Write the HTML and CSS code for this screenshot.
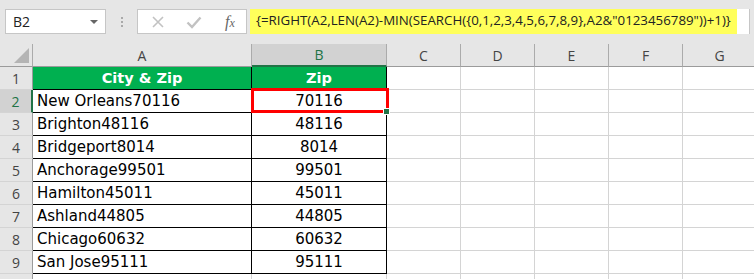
FILE: index.html
```html
<!DOCTYPE html>
<html lang="en">
<head>
    <meta charset="UTF-8">
    <title>Extract Zip</title>
    <link rel="stylesheet" href="styles.css">
</head>
<body>
    <div class="formula-bar">
        <div class="name-box">
            <span>B2</span>
            <span class="caret"></span>
        </div>
        <div class="grip"><i></i><i></i><i></i></div>
        <div class="fx-box">
            <svg class="ico" width="14" height="14" viewBox="0 0 14 14">
                <path d="M2 2 L12 12 M12 2 L2 12" stroke="#c2c2c2" stroke-width="1.6" fill="none"/>
            </svg>
            <svg class="ico" width="16" height="14" viewBox="0 0 16 14">
                <path d="M1.5 7.5 L6 12 L14.5 2.5" stroke="#c2c2c2" stroke-width="2.4" fill="none"/>
            </svg>
            <span class="fx">f<small>x</small></span>
        </div>
        <div class="formula">
            <span class="formula-text">{=RIGHT(A2,LEN(A2)-MIN(SEARCH({0,1,2,3,4,5,6,7,8,9},A2&amp;"0123456789"))+1)}</span>
        </div>
    </div>

    <div class="sheet">
        <!-- column headers -->
        <div class="ch corner"><span class="tri"></span></div>
        <div class="ch">A</div>
        <div class="ch sel">B</div>
        <div class="ch">C</div>
        <div class="ch">D</div>
        <div class="ch">E</div>
        <div class="ch">F</div>
        <div class="ch">G</div>

        <div class="rh">1</div>
        <div class="c t a head">City &amp; Zip</div>
        <div class="c t head">Zip</div>
        <div class="c"></div><div class="c"></div><div class="c"></div><div class="c"></div><div class="c"></div>

        <div class="rh sel">2</div>
        <div class="c t a">New Orleans70116</div>
        <div class="c t num active">70116<span class="handle"></span></div>
        <div class="c"></div><div class="c"></div><div class="c"></div><div class="c"></div><div class="c"></div>

        <div class="rh">3</div>
        <div class="c t a">Brighton48116</div>
        <div class="c t num">48116</div>
        <div class="c"></div><div class="c"></div><div class="c"></div><div class="c"></div><div class="c"></div>

        <div class="rh">4</div>
        <div class="c t a">Bridgeport8014</div>
        <div class="c t num">8014</div>
        <div class="c"></div><div class="c"></div><div class="c"></div><div class="c"></div><div class="c"></div>

        <div class="rh">5</div>
        <div class="c t a">Anchorage99501</div>
        <div class="c t num">99501</div>
        <div class="c"></div><div class="c"></div><div class="c"></div><div class="c"></div><div class="c"></div>

        <div class="rh">6</div>
        <div class="c t a">Hamilton45011</div>
        <div class="c t num">45011</div>
        <div class="c"></div><div class="c"></div><div class="c"></div><div class="c"></div><div class="c"></div>

        <div class="rh">7</div>
        <div class="c t a">Ashland44805</div>
        <div class="c t num">44805</div>
        <div class="c"></div><div class="c"></div><div class="c"></div><div class="c"></div><div class="c"></div>

        <div class="rh">8</div>
        <div class="c t a">Chicago60632</div>
        <div class="c t num">60632</div>
        <div class="c"></div><div class="c"></div><div class="c"></div><div class="c"></div><div class="c"></div>

        <div class="rh">9</div>
        <div class="c t a">San Jose95111</div>
        <div class="c t num">95111</div>
        <div class="c"></div><div class="c"></div><div class="c"></div><div class="c"></div><div class="c"></div>

        <!-- partly visible row 10 -->
        <div class="rh"></div>
        <div class="c"></div><div class="c"></div>
        <div class="c"></div><div class="c"></div><div class="c"></div><div class="c"></div><div class="c"></div>
    </div>
</body>
</html>
```

FILE: styles.css
```css
body {
	margin: 0;
	width: 754px;
	height: 279px;
	overflow: hidden;
	background-color: #fff;
	font-family: "Open Sans", "Noto Sans", sans-serif;
}

/* top strip: name box + formula */
.formula-bar {
	height: 44px;
	background-color: #e6e6e6;
	display: flex;
	align-items: flex-start;
	padding: 9px 4px 0 5px;
	box-sizing: border-box;
}

.name-box {
	width: 101px;
	height: 25px;
	box-sizing: border-box;
	background-color: #fff;
	border: 1px solid #c6c6c6;
	display: flex;
	align-items: center;
	justify-content: space-between;
	padding: 0 7px 0 7px;
	font-size: 14px;
	color: #222;
}

.caret {
	width: 0;
	height: 0;
	border-left: 4px solid transparent;
	border-right: 4px solid transparent;
	border-top: 4px solid #666;
}

.grip {
	width: 31px;
	height: 25px;
	display: flex;
	flex-direction: column;
	align-items: center;
	justify-content: center;
	gap: 2px;
}

.grip i {
	width: 2px;
	height: 2px;
	background-color: #a9a9a9;
}

.fx-box {
	width: 110px;
	height: 25px;
	box-sizing: border-box;
	background-color: #fff;
	border: 1px solid #c6c6c6;
	display: flex;
	align-items: center;
	padding: 0 0 0 13px;
	gap: 21px;
}

.fx {
	font-family: "Liberation Serif", serif;
	font-style: italic;
	font-size: 16px;
	color: #666;
	margin-left: 2px;
}

.fx small {
	font-size: 12px;
}

.formula {
	margin-left: 3px;
	flex: 1;
	height: 25px;
	box-sizing: border-box;
	background-color: #fff;
	border-right: 1px solid #c6c6c6;
	display: flex;
}

.formula-text {
	background-color: #ffff5b;
	width: 487px;
	box-sizing: border-box;
	padding: 2px 0 0 6px;
	font-size: 13.3px;
	color: #222;
	white-space: nowrap;
}

/* worksheet grid */
.sheet {
	display: grid;
	grid-template-columns: 33px 219px 135px 74px 74px 74px 74px 74px;
	grid-auto-rows: 23px;
}

.ch, .rh {
	background-color: #e6e6e6;
	color: #444;
	font-size: 14px;
	display: flex;
	align-items: center;
	justify-content: center;
	box-sizing: border-box;
}

.ch {
	border-right: 1px solid #ababab;
	border-bottom: 1px solid #9b9b9b;
}

.ch.sel {
	background-color: #d2d2d2;
	color: #217346;
	border-bottom: 2px solid #217346;
}

.corner {
	position: relative;
}

.tri {
	position: absolute;
	right: 3px;
	bottom: 3px;
	width: 0;
	height: 0;
	border-left: 15px solid transparent;
	border-bottom: 15px solid #b4b4b4;
}

.rh {
	border-right: 1px solid #9b9b9b;
	border-bottom: 1px solid #d4d4d4;
}

.rh.sel {
	background-color: #d2d2d2;
	color: #217346;
	border-right: 2px solid #217346;
}

.c {
	box-sizing: border-box;
	border-right: 1px solid #d4d4d4;
	border-bottom: 1px solid #d4d4d4;
	font-family: "DejaVu Sans", Verdana, sans-serif;
	font-size: 15px;
	color: #000;
	display: flex;
	align-items: center;
	white-space: nowrap;
}

.c.t {
	border-right-color: #000;
	border-bottom-color: #000;
}

.c.a {
	padding-left: 4px;
}

.c.num {
	justify-content: center;
}

.c.head {
	background-color: #00b050;
	color: #fff;
	font-weight: bold;
	font-size: 14.5px;
	justify-content: center;
	padding-left: 0;
}

.active {
	position: relative;
}

.active::after {
	content: "";
	position: absolute;
	top: -2px;
	left: -1px;
	right: -3px;
	bottom: -1px;
	border: 3px solid #ff0000;
}

.handle {
	position: absolute;
	right: -4px;
	bottom: -3px;
	width: 5px;
	height: 5px;
	background-color: #217346;
	border: 1px solid #fff;
	z-index: 1;
}
```
